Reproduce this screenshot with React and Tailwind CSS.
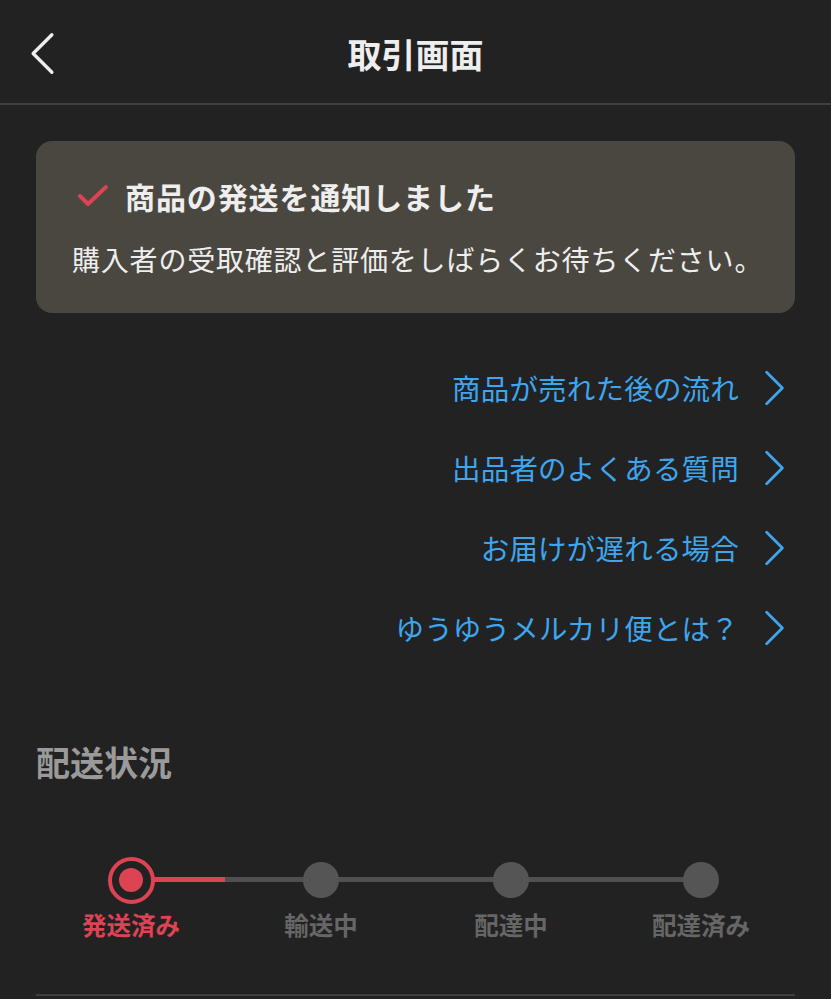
const links = [
  "商品が売れた後の流れ",
  "出品者のよくある質問",
  "お届けが遅れる場合",
  "ゆうゆうメルカリ便とは？",
];

const steps = ["発送済み", "輸送中", "配達中", "配達済み"];

function Chevron({ className, left }) {
  return (
    <svg viewBox="0 0 24 40" className={className} fill="none" stroke="currentColor" strokeWidth="3.2" strokeLinecap="round" strokeLinejoin="round">
      {left ? <path d="M21 2 L3 20 L21 38" /> : <path d="M3 2 L21 20 L3 38" />}
    </svg>
  );
}

export default function App() {
  return (
    <div
      className="w-[831px] h-[999px] bg-[#222222] overflow-hidden"
      style={{ fontFamily: '"Noto Sans CJK JP", "Noto Sans", sans-serif' }}
    >
      <header className="relative h-[105px] border-b-2 border-[#3f3f3f] flex items-center justify-center">
        <button type="button" className="absolute left-[30px] top-[31px] text-[#eeeeee]">
          <Chevron left className="w-[25px] h-[45px]" />
        </button>
        <h1 className="text-[34px] font-bold text-[#eeeeee] leading-none mt-1">取引画面</h1>
      </header>

      <div className="px-[36px] pt-[36px]">
        <div className="bg-[#4a4740] rounded-[16px] h-[172px] pl-[36px] pt-[40px]">
          <div className="flex items-center gap-[16px] pl-[5px]">
            <svg viewBox="0 0 32 24" className="w-[32px] h-[24px]" fill="none" stroke="#dc4353" strokeWidth="4" strokeLinecap="round" strokeLinejoin="round">
              <path d="M3 12 L11 20 L29 3" />
            </svg>
            <p className="text-[30px] font-bold text-[#eeeeee] leading-none tracking-[0.9px]">商品の発送を通知しました</p>
          </div>
          <p className="text-[28px] text-[#eeeeee] leading-none mt-[34px] tracking-[0.8px]">
            購入者の受取確認と評価をしばらくお待ちください。
          </p>
        </div>

        <div className="mt-[55px] flex flex-col items-end gap-[40px] pr-[10px]">
          {links.map((l) => (
            <a key={l} className="flex items-center gap-[25px] text-[#3ea6ee] h-[40px]">
              <span className="text-[28.5px] leading-none tracking-[0.2px]">{l}</span>
              <Chevron className="w-[21px] h-[36px]" />
            </a>
          ))}
        </div>

        <h2 className="mt-[97px] text-[34px] font-bold text-[#9a9a9a] leading-none">配送状況</h2>

        <div className="relative mt-[76px] h-[50px]">
          <div className="absolute left-[94px] right-[95px] top-[22px] h-[5px] bg-[#505050]" />
          <div className="absolute left-[94px] w-[95px] top-[22px] h-[5px] bg-[#dc4353]" />
          <div className="grid grid-cols-4 w-[760px]">
            {steps.map((s, i) => (
              <div key={s} className="flex flex-col items-center w-[190px]">
                <div className="h-[50px] flex items-center justify-center">
                  {i === 0 ? (
                    <div className="relative w-[47px] h-[47px] rounded-full border-[4px] border-[#dc4353] bg-[#222222] flex items-center justify-center">
                      <div className="w-[24px] h-[24px] rounded-full bg-[#dc4353]" />
                    </div>
                  ) : (
                    <div className="relative w-[36px] h-[36px] rounded-full bg-[#555555]" />
                  )}
                </div>
                <span
                  className={
                    "mt-[8px] text-[24.5px] font-bold leading-none whitespace-nowrap " +
                    (i === 0 ? "text-[#dc4353]" : "text-[#666666]")
                  }
                >
                  {s}
                </span>
              </div>
            ))}
          </div>
        </div>

        <div className="mt-[89px] h-[2px] bg-[#3f3f3f]" />
      </div>
    </div>
  );
}
